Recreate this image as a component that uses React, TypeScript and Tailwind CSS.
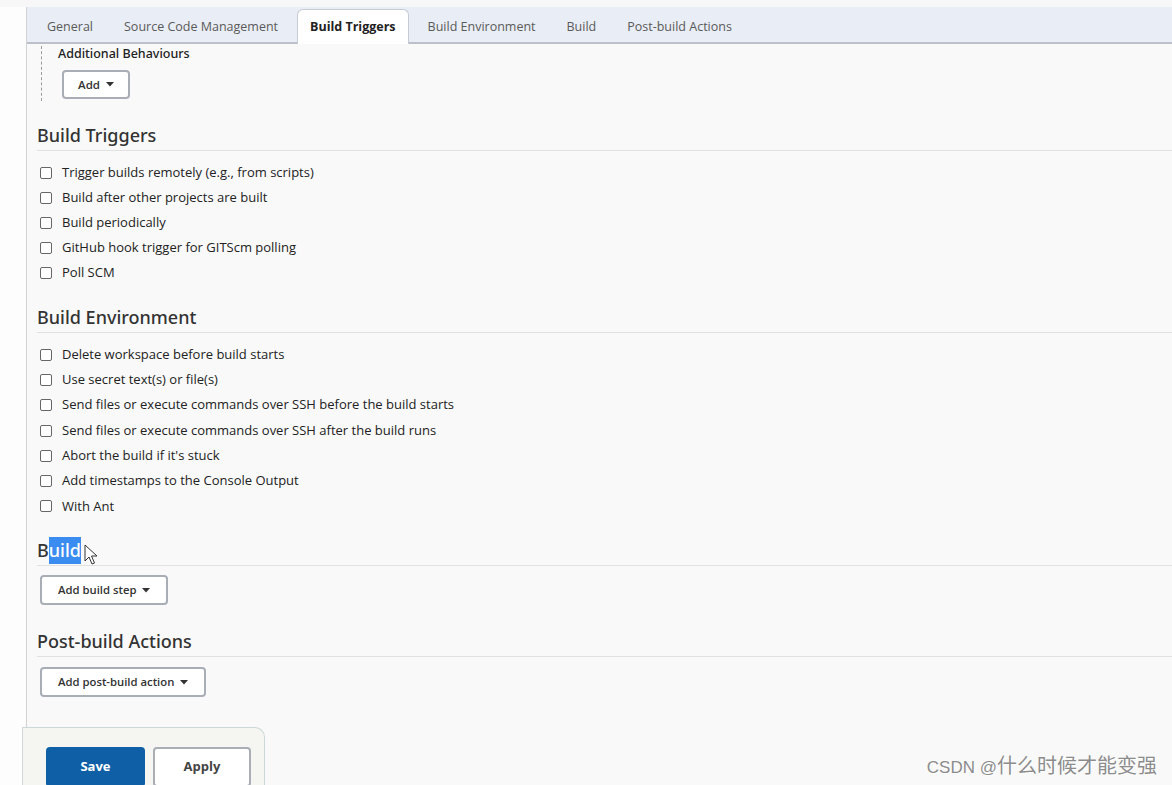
import React from 'react';

const tabs = ['General', 'Source Code Management', 'Build Triggers', 'Build Environment', 'Build', 'Post-build Actions'];

const triggers = [
  'Trigger builds remotely (e.g., from scripts)',
  'Build after other projects are built',
  'Build periodically',
  'GitHub hook trigger for GITScm polling',
  'Poll SCM',
];

const environment = [
  'Delete workspace before build starts',
  'Use secret text(s) or file(s)',
  'Send files or execute commands over SSH before the build starts',
  'Send files or execute commands over SSH after the build runs',
  "Abort the build if it's stuck",
  'Add timestamps to the Console Output',
  'With Ant',
];

function Caret() {
  return (
    <svg width="8" height="5" viewBox="0 0 8 5" className="ml-[6px]">
      <path d="M0 0h8L4 4.5z" fill="#333" />
    </svg>
  );
}

function DropButton({ text }: { text: string }) {
  return (
    <button className="h-[30px] px-[16px] flex items-center border-2 border-[#a9adb5] rounded-[4px] bg-white text-[11.3px] font-semibold text-[#333]">
      {text}
      <Caret />
    </button>
  );
}

function CheckRow({ label, h }: { label: string; h: string }) {
  return (
    <label className={`flex items-center ${h} pl-[3px]`}>
      <span className="w-[12px] h-[12px] border border-[#666] rounded-[2px] bg-white" />
      <span className="ml-[10px] text-[13px] text-[#222]">{label}</span>
    </label>
  );
}

function Heading({ children }: { children: React.ReactNode }) {
  return (
    <h2
      className="h-[28px] pb-[2px] border-b border-[#e1e1e1] text-[18px] font-medium text-[#333] flex items-center"
      style={{ fontFamily: '"Noto Sans", "Open Sans", sans-serif' }}
    >
      {children}
    </h2>
  );
}

export default function App() {
  return (
    <div
      className="relative w-[1172px] h-[785px] overflow-hidden bg-[#f9f9f9]"
      style={{ fontFamily: '"Open Sans", "Noto Sans", sans-serif' }}
    >
      <div className="h-[7px] bg-[#f7f7f7]" />
      <div className="flex h-[720px]">
        <div className="w-[26px] bg-[#fdfdfd]" />
        <div className="flex-1 border-l border-[#d2d2d2]">
          {/* tab bar */}
          <div className="h-[37px] bg-[#e9edf5] border-b-2 border-[#bcc0ca] flex items-end pl-[8px] gap-[7px]">
            {tabs.map((t) =>
              t === 'Build Triggers' ? (
                <div
                  key={t}
                  className="h-[35px] -mb-[2px] px-3 flex items-center bg-white border border-b-0 border-[#c6cad3] rounded-t-[6px] text-[12.5px] font-bold text-[#222]"
                >
                  {t}
                </div>
              ) : (
                <div key={t} className="h-[29px] px-3 flex items-center text-[12.5px] text-[#5a5a5a]">
                  {t}
                </div>
              )
            )}
          </div>

          <div className="pl-[10px]">
            {/* additional behaviours */}
            <div className="relative pl-[21px] pb-[1px] pt-[1px]">
              <div className="absolute left-[4px] top-[2px] bottom-[-1px] border-l border-dashed border-[#9a9a9a]" />
              <div
                className="text-[12.5px] leading-[17px] font-medium text-[#222]"
                style={{ fontFamily: '"Noto Sans", "Open Sans", sans-serif' }}
              >
                Additional Behaviours
              </div>
              <div className="mt-[8px] ml-[4px]">
                <button className="h-[29px] w-[68px] flex items-center justify-center border-2 border-[#a9adb5] rounded-[4px] bg-white text-[11.5px] font-semibold text-[#333]">
                  Add
                  <Caret />
                </button>
              </div>
            </div>

            <div className="mt-[23px]">
              <Heading>Build Triggers</Heading>
              <div className="mt-[9px]">
                {triggers.map((t) => (
                  <CheckRow key={t} label={t} h="h-[25px]" />
                ))}
              </div>
            </div>

            <div className="mt-[20px]">
              <Heading>Build Environment</Heading>
              <div className="mt-[9px]">
                {environment.map((t) => (
                  <CheckRow key={t} label={t} h="h-[25.3px]" />
                ))}
              </div>
            </div>

            <div className="mt-[19px]">
              <Heading>
                B<span className="bg-[#3a8cf0] text-white">uild</span>
                <svg width="13" height="21" viewBox="0 0 13 21" className="ml-[3px] mt-[8px]">
                  <path d="M1 1v16l4-4 3 7 2.5-1-3-7h5.5z" fill="#fff" stroke="#333" strokeWidth="1" />
                </svg>
              </Heading>
              <div className="mt-[9px] pl-[3px]">
                <DropButton text="Add build step" />
              </div>
            </div>

            <div className="mt-[24px]">
              <Heading>Post-build Actions</Heading>
              <div className="mt-[10px] pl-[3px]">
                <DropButton text="Add post-build action" />
              </div>
            </div>
          </div>
        </div>
      </div>

      {/* save bar */}
      <div className="flex h-[58px]">
        <div className="w-[22px] bg-[#fdfdfd]" />
        <div className="w-[243px] bg-[#f5f5f1] border border-b-0 border-[#cdd8d8] rounded-tr-[10px] pt-[19px] pl-[23px] flex gap-[8px]">
          <button className="w-[99px] h-[40px] rounded-[4px] bg-[#0f5fa7] text-white text-[13px] font-bold">Save</button>
          <button className="w-[98px] h-[40px] rounded-[4px] bg-white border-2 border-[#a9adb5] text-[#444] text-[13px] font-bold">
            Apply
          </button>
        </div>
      </div>

      <div
        className="absolute right-[15px] bottom-[5px] flex items-baseline text-[#8c8c8c] [text-shadow:1px_1px_0_#ffffff]"
        style={{ fontFamily: '"Liberation Sans", "Noto Sans CJK SC", sans-serif' }}
      >
        <span className="text-[17px]">CSDN @</span>
        <span className="text-[20px]" style={{ fontFamily: '"Noto Sans CJK SC", sans-serif' }}>
          什么时候才能变强
        </span>
      </div>
    </div>
  );
}
